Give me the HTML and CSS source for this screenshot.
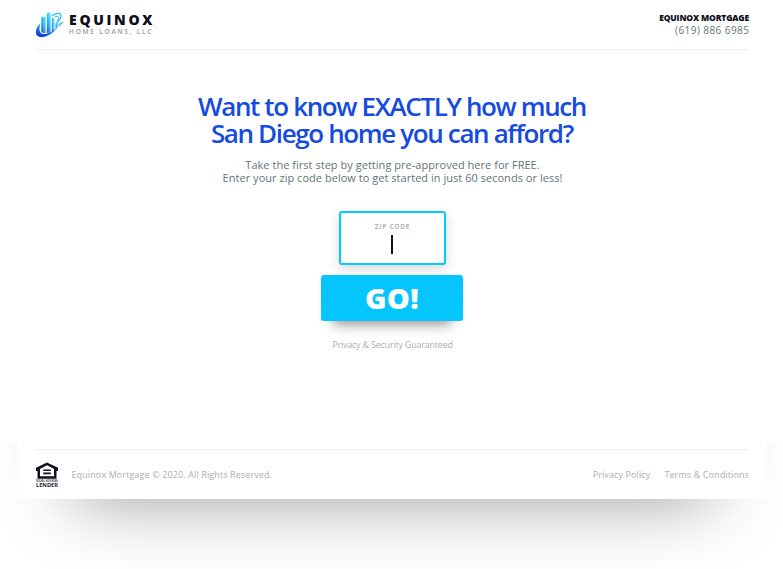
FILE: index.html
```html
<!DOCTYPE html>
<html lang="en">
<head>
<meta charset="utf-8">
<title>Equinox Home Loans</title>
<link rel="stylesheet" href="styles.css">
</head>
<body>
<div class="card">
  <header class="header">
    <div class="brand">
      <svg class="brand-mark" viewBox="0 0 28 26" aria-hidden="true">
        <defs>
          <linearGradient id="mark" gradientUnits="userSpaceOnUse" x1="16" y1="0" x2="10" y2="25">
            <stop offset="0" stop-color="#2fe0f6"/>
            <stop offset="0.5" stop-color="#18aaf5"/>
            <stop offset="1" stop-color="#1141dc"/>
          </linearGradient>
        </defs>
        <g fill="url(#mark)">
          <path d="M4.500 11.500C0 15-1.500 21 1.200 23.800c3.800 3.500 13.800.4 20.300-8.200-5.500 4.800-11.500 7.200-15.300 6.200C3.300 21 2.600 16.500 4.500 11.500z"/>
          <path d="M5.300 5.600 7.600 4.500V21L5.300 20.300z"/>
          <path d="M7.600 4.500 9.500 5.600V21H7.600z" opacity=".8"/>
          <path d="M10.800 1.500 12.900.3V20.800L10.800 21z"/>
          <path d="M12.900.3 14.600 1.600V20.200L12.900 20.700z" opacity=".8"/>
          <path d="M15.800 6.600 17.200 5.500V19L15.800 19.700z"/>
          <path d="M17.200 5.500 18.400 6.600V18.200L17.200 18.900z" opacity=".7"/>
          <path d="M19.500 11 20.800 10V16.200L19.500 17.300z"/>
          <path d="M20.800 10 22 11V14.800L20.800 15.800z" opacity=".7"/>
        </g>
        <path d="M15.800 3.800C20 .7 25 .3 25 3.400c0 2.200-1.600 4.800-3.800 6.900" fill="none" stroke="#25c4f4" stroke-width="1.300"/>
        <path d="M18.800 5.100c2-.9 3.800-1 3.800.5 0 1-.6 2-1.600 3.200M22.300 12.800l4.700-2.600-4.300 4.800" fill="none" stroke="#239ff1" stroke-width=".9"/>
      </svg>
      <div class="brand-text">
        <div class="brand-name">EQUINOX</div>
        <div class="brand-sub">HOME LOANS, LLC</div>
      </div>
    </div>
    <div class="contact">
      <div class="contact-name">EQUINOX MORTGAGE</div>
      <div class="contact-phone">(619) 886 6985</div>
    </div>
  </header>
  <main class="main">
    <h1 class="title">Want to know EXACTLY how much<br>San Diego home you can afford?</h1>
    <p class="lead">Take the first step by getting pre-approved here for FREE.<br>Enter your zip code below to get started in just 60 seconds or less!</p>
    <div class="zip">
      <span class="zip-label">ZIP CODE</span>
      <span class="caret"></span>
    </div>
    <button class="go" type="button">GO!</button>
    <div class="note">Privacy &amp; Security Guaranteed</div>
  </main>
  <footer class="footer">
    <svg class="lender" viewBox="0 0 22 26" aria-hidden="true">
      <path fill="#11121f" fill-rule="evenodd" d="M11 .4 22 5.800V9H20.500V16.700H1.500V9H0V5.800zM11 3.300 4 6.900V14.200H18V6.900z"/>
      <path fill="#11121f" d="M7.200 7.400h7.600v1.700H7.200zM7.200 10.600h7.600v1.700H7.200z"/>
      <text x="0" y="20.300" class="lender-small" textLength="22" lengthAdjust="spacingAndGlyphs">EQUAL HOUSING</text>
      <text x="0" y="25" class="lender-big" textLength="22" lengthAdjust="spacingAndGlyphs">LENDER</text>
    </svg>
    <span class="copyright">Equinox Mortgage © 2020. All Rights Reserved.</span>
    <nav class="links"><a>Privacy Policy</a><a>Terms &amp; Conditions</a></nav>
  </footer>
</div>
</body>
</html>
```
FILE: styles.css
```css
* { box-sizing: border-box; }
body {
  margin: 0;
  height: 569px;
  overflow: hidden;
  background: #fff;
  font-family: "Open Sans", sans-serif;
  color: #0d0e1b;
}
.card {
  position: relative;
  z-index: 0;
  display: flex;
  flex-direction: column;
  width: 750px;
  height: 499px;
  margin-left: 17px;
  padding: 0 18px 0 19px;
}
/* The shadow only shows around the footer end of the card. */
.card::before {
  content: "";
  position: absolute;
  z-index: -1;
  inset: 0;
  border-radius: 0 0 4px 4px;
  background: #fff;
  box-shadow: 0 54px 70px -56px rgba(0, 0, 0, .42);
  clip-path: inset(443px -17px -70px);
}
.header {
  display: flex;
  justify-content: space-between;
  height: 50px;
  border-bottom: 1px solid #ededee;
}
.brand { display: flex; padding-top: 12px; }
.brand-mark { width: 28px; height: 26px; }
.brand-text { margin-left: 5px; }
.brand-name {
  font-size: 14px;
  line-height: 16px;
  font-weight: 800;
  letter-spacing: 2.700px;
}
.brand-sub {
  font-size: 6.500px;
  line-height: 8px;
  font-weight: 600;
  letter-spacing: 1.780px;
  color: #929ba0;
}
.contact { padding-top: 12px; text-align: right; }
.contact-name { font-size: 8.500px; line-height: 12px; font-weight: 800; letter-spacing: -.15px; }
.contact-phone {
  font-size: 10px;
  line-height: 13px;
  letter-spacing: .43px;
  margin-right: -.4px;
  color: #65747a;
}
.main {
  display: flex;
  flex-direction: column;
  align-items: center;
  height: 399px;
  text-align: center;
}
.title {
  margin: 43px 1px 0 0;
  font-size: 26px;
  line-height: 27px;
  font-weight: 600;
  letter-spacing: -1.370px;
  color: #164be0;
}
.lead {
  margin: 11px 0 0;
  font-size: 11px;
  line-height: 13px;
  letter-spacing: .03px;
  color: #65747a;
}
.zip {
  display: flex;
  flex-direction: column;
  align-items: center;
  width: 107px;
  height: 54px;
  margin-top: 27px;
  padding-top: 9px;
  border: 2px solid #04cbff;
  border-radius: 3px;
  background: #fff;
  box-shadow: 0 4px 12px rgba(0, 0, 0, .16);
}
.zip-label {
  font-size: 6.500px;
  line-height: 9px;
  font-weight: 700;
  letter-spacing: .75px;
  color: #aeb6b9;
}
.caret { width: 2px; height: 19px; margin: 4px 1px 0 0; background: #11121c; }
.go {
  width: 142px;
  height: 46px;
  margin: 10px 1px 0 0;
  padding: 0;
  border: 0;
  border-radius: 3px;
  background: #04c6fd;
  color: #fff;
  font: 800 29px/46px "Open Sans", sans-serif;
  letter-spacing: .3px;
  box-shadow: 0 14px 14px -12px rgba(0, 0, 0, .5);
}
.note { margin-top: 17px; font-size: 9px; line-height: 13px; letter-spacing: -.22px; color: #a9b1b4; }
.footer {
  display: flex;
  align-items: center;
  height: 50px;
  border-top: 1px solid #ededee;
  font-size: 9px;
  letter-spacing: .11px;
  color: #a9b1b4;
}
.lender { width: 22px; height: 26px; letter-spacing: 0; }
.lender-small { font: 700 2.600px "Open Sans", sans-serif; fill: #44454d; }
.lender-big { font: 700 5px "Open Sans", sans-serif; fill: #22232b; }
.copyright { margin-left: 13.500px; }
.links { display: flex; gap: 14px; margin-left: auto; }
```
